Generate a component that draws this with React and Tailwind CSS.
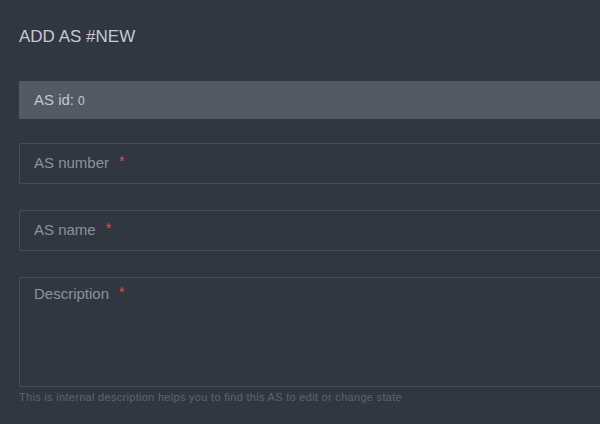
import React from 'react';

function Field({ label, tall }) {
  return (
    <div className={`w-[640px] border border-[#474e59] rounded-[2px] px-[14px] ${tall ? 'h-[110px] pt-[4px]' : 'h-[41px] flex items-center'}`}>
      <span className="text-[15px] text-[#8b929c]">
        {label}
        <span className="text-[14px] text-[#d9534f] ml-[10px] relative -top-[2px]">*</span>
      </span>
    </div>
  );
}

export default function App() {
  return (
    <div
      className="w-[600px] h-[424px] overflow-hidden bg-[#303742] pl-[19px]"
      style={{ fontFamily: '"Liberation Sans", Arial, sans-serif' }}
    >
      <h2 className="pt-[27px] text-[17px] leading-[20px] text-[#c6cad0]">ADD AS #NEW</h2>

      <div className="mt-[34px] w-[640px] h-[38px] bg-[#535a65] flex items-center px-[15px] text-[#c3c7cd]">
        <span className="text-[15px]">AS id:</span>
        <span className="text-[12px] ml-[4px] mt-[1px]">0</span>
      </div>

      <div className="mt-[24px]">
        <Field label="AS number" />
      </div>
      <div className="mt-[26px]">
        <Field label="AS name" />
      </div>
      <div className="mt-[26px]">
        <Field label="Description" tall />
      </div>
      <p className="mt-[3px] text-[11px] leading-[14px] text-[#5e6570] tracking-[0.3px]">
        This is internal description helps you to find this AS to edit or change state
      </p>
    </div>
  );
}
